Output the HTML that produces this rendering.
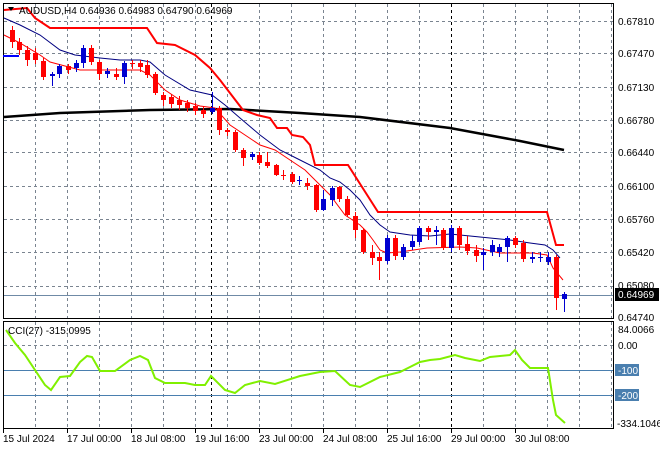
<!DOCTYPE html>
<html><head><meta charset="utf-8"><style>
html,body{margin:0;padding:0;background:#fff;}
body{width:660px;height:450px;overflow:hidden;position:relative;font-family:"Liberation Sans","DejaVu Sans",sans-serif;font-size:10px;color:#000;}
svg{position:absolute;left:0;top:0;}
text{font-family:"Liberation Sans","DejaVu Sans",sans-serif;font-size:10px;}
</style></head><body>
<svg id="s" width="660" height="450" viewBox="0 0 660 450" xmlns="http://www.w3.org/2000/svg">
<g id="grid" stroke="#7a8490" stroke-width="1" stroke-dasharray="3,3" fill="none"></g>
<rect x="3.5" y="3.5" width="610" height="315" fill="none" stroke="#000"/>
<rect x="3.5" y="321.5" width="610" height="107" fill="none" stroke="#000"/>
<line x1="4" y1="295.5" x2="613" y2="295.5" stroke="#6f8aa6"/>
<line x1="4" y1="370.5" x2="613" y2="370.5" stroke="#4a7faf"/>
<line x1="4" y1="395.5" x2="613" y2="395.5" stroke="#4a7faf"/>
<polyline fill="none" stroke="#000" stroke-width="2.5" points="4,117 60,113 150,110 230,109 300,113 360,117 450,128 520,141 564,150"/>
<polyline fill="none" stroke="#ff0000" stroke-width="2" points="4,10 27,8 35,18 50,28 147,28 157,43 175,45 195,55 210,68 220,80 243,110 257,115 270,118 277,128 287,128 292,135 303,137 310,145 315,165 348,165 378,212 547,212 556,245 564,245"/>
<polyline fill="none" stroke="#000080" stroke-width="1" points="4,18 20,25 40,35 60,50 75,55 100,58 120,60 140,60 150,62 165,75 190,90 212,95 225,105 240,118 260,135 280,150 300,160 320,170 330,178 340,182 350,190 360,200 370,215 380,225 390,232 410,235 430,236 450,234 470,236 490,238 510,240 530,243 545,245 553,250 560,258"/>
<polyline fill="none" stroke="#ff0000" stroke-width="1" points="4,35 20,43 40,55 50,62 65,66 80,70 130,70 140,70 150,75 165,90 180,100 200,106 215,108 230,125 245,135 260,145 275,150 290,160 305,170 315,180 330,195 345,215 360,225 367,232 373,240 380,250 387,253 400,252 427,248 460,247 477,248 500,253 533,253 547,255 553,268 563,280"/>
<line x1="3" y1="56" x2="19" y2="56" stroke="#0000ff" stroke-width="2"/>
<g id="c"></g>
<polyline fill="none" stroke="#80f000" stroke-width="2" points="6,330 15,343 25,355 35,370 45,385 51,390 60,377 70,376 80,362 87,356 92,357 100,371 115,371 130,360 140,356 148,360 155,378 165,383 185,383 195,385 205,385 211,376 225,390 235,393 245,385 260,381 275,384 300,376 320,372 335,371 350,385 360,387 380,377 400,372 410,367 420,362 430,360 440,359 455,355 465,358 480,361 490,357 500,356 510,355 515,350 522,360 530,368 540,368 548,368 553,400 556,415 565,423"/>
<g fill="#000">
<text x="618" y="25">0.67810</text><text x="618" y="57">0.67470</text><text x="618" y="91">0.67130</text><text x="618" y="124">0.66780</text><text x="618" y="156">0.66440</text><text x="618" y="190">0.66100</text><text x="618" y="223">0.65760</text><text x="618" y="256">0.65420</text><text x="618" y="289">0.65080</text><text x="618" y="321">0.64740</text>
</g>
<rect x="615" y="288" width="44" height="13" fill="#000"/>
<text x="618" y="298" fill="#fff">0.64969</text>
<text x="618" y="333">84.0066</text>
<text x="618" y="349">0.00</text>
<rect x="615" y="364" width="24" height="12" fill="#4a7faf"/><text x="618" y="374" fill="#fff">-100</text>
<rect x="615" y="389" width="24" height="12" fill="#4a7faf"/><text x="618" y="399" fill="#fff">-200</text>
<text x="617" y="427">-334.1046</text>
<text x="8" y="334">CCI(27) -315.0995</text>
<path d="M8,7 L14,7 L11,11 Z" fill="#000"/>
<text x="19" y="14">AUDUSD,H4  0.64936 0.64983 0.64790 0.64969</text>
<g id="ax" fill="#000"></g>
</svg>
<script>
var ns="http://www.w3.org/2000/svg";
function el(p,t,a){var e=document.createElementNS(ns,t);for(var k in a)e.setAttribute(k,a[k]);p.appendChild(e);return e;}
var g=document.getElementById('grid');
[21,53,87,120,152,186,219,252,286].forEach(function(y){el(g,'line',{x1:4,y1:y+.5,x2:613,y2:y+.5});});
el(g,'line',{x1:4,y1:345.5,x2:613,y2:345.5});
for(var x=35;x<613;x+=32){if(x==451)continue;el(g,'line',{x1:x+.5,y1:4,x2:x+.5,y2:318});el(g,'line',{x1:x+.5,y1:322,x2:x+.5,y2:428});}
[211,451].forEach(function(x){el(g,'line',{x1:x+.5,y1:4,x2:x+.5,y2:318,stroke:'#000'});el(g,'line',{x1:x+.5,y1:322,x2:x+.5,y2:428,stroke:'#000'});});
// candles: x, top, bottom, hi, lo, color(r/b)
var C=[[12,30,42,26,48,'r'],[19,42,50,38,55,'r'],[27,50,60,46,66,'r'],[35,53,60,48,64,'r'],[43,61,77,58,80,'r'],[52,74,76,72,86,'b'],[59,66,74,64,78,'b'],[68,66,70,64,74,'r'],[76,63,68,60,72,'b'],[83,48,63,45,68,'b'],[91,48,62,45,65,'r'],[99,62,74,60,80,'r'],[107,71,74,68,78,'b'],[116,74,77,68,80,'r'],[124,63,77,61,84,'b'],[132,63,64,60,69,'r'],[140,63,67,60,72,'r'],[147,65,75,60,78,'r'],[155,74,93,72,95,'r'],[163,95,100,92,106,'r'],[171,97,104,94,108,'r'],[179,100,105,96,110,'r'],[187,103,108,100,112,'r'],[195,106,111,103,115,'r'],[203,110,114,106,118,'r'],[212,108,112,92,114,'b'],[219,108,130,106,135,'r'],[227,130,132,128,136,'r'],[235,132,150,130,152,'r'],[243,150,158,148,166,'r'],[252,154,157,152,160,'b'],[259,155,163,152,165,'r'],[267,162,166,152,168,'r'],[276,165,175,164,176,'r'],[283,175,176,170,180,'r'],[292,174,182,172,184,'r'],[299,180,181,176,185,'b'],[307,183,186,178,190,'r'],[316,185,210,184,212,'r'],[323,199,210,190,211,'b'],[332,188,200,186,206,'b'],[339,187,199,186,202,'r'],[347,199,215,196,217,'r'],[355,216,230,212,238,'r'],[363,230,252,228,254,'r'],[372,252,258,245,265,'r'],[379,257,261,252,280,'r'],[387,238,261,235,264,'b'],[395,238,256,235,260,'r'],[403,247,257,244,260,'b'],[412,241,247,235,250,'b'],[419,228,242,226,245,'b'],[428,228,232,226,240,'r'],[436,230,232,226,245,'b'],[443,230,248,228,250,'r'],[451,228,248,225,252,'b'],[459,228,245,226,250,'r'],[467,244,251,236,255,'r'],[476,250,256,245,262,'r'],[483,252,255,248,270,'b'],[492,245,252,240,256,'b'],[499,247,252,244,257,'b'],[507,238,247,236,262,'b'],[515,238,245,236,248,'r'],[523,243,259,240,262,'r'],[532,257,259,252,263,'b'],[540,257,258,252,262,'b'],[548,257,262,252,265,'b'],[556,257,298,255,310,'r'],[564,294,299,292,312,'b']];
var cg=document.getElementById('c');
C.forEach(function(c){var col=c[5]=='r'?'#ff0000':'#0000d0';el(cg,'line',{x1:c[0]+.5,y1:c[3],x2:c[0]+.5,y2:c[4],stroke:col});var h=Math.max(1,c[2]-c[1]);el(cg,'rect',{x:c[0]-2,y:c[1],width:5,height:h,fill:col});});
var ax=document.getElementById('ax');
</script>
<svg width="660" height="450" style="position:absolute;left:0;top:0" xmlns="http://www.w3.org/2000/svg">
<g stroke="#000"><line x1="3.5" y1="429" x2="3.5" y2="433"/><line x1="67.5" y1="429" x2="67.5" y2="433"/><line x1="131.5" y1="429" x2="131.5" y2="433"/><line x1="195.5" y1="429" x2="195.5" y2="433"/><line x1="259.5" y1="429" x2="259.5" y2="433"/><line x1="323.5" y1="429" x2="323.5" y2="433"/><line x1="387.5" y1="429" x2="387.5" y2="433"/><line x1="451.5" y1="429" x2="451.5" y2="433"/><line x1="515.5" y1="429" x2="515.5" y2="433"/></g>
<g font-family="Liberation Sans, sans-serif" font-size="10" fill="#000">
<text x="3" y="442">15 Jul 2024</text><text x="67" y="442">17 Jul 00:00</text><text x="131" y="442">18 Jul 08:00</text><text x="195" y="442">19 Jul 16:00</text><text x="259" y="442">23 Jul 00:00</text><text x="323" y="442">24 Jul 08:00</text><text x="387" y="442">25 Jul 16:00</text><text x="451" y="442">29 Jul 00:00</text><text x="515" y="442">30 Jul 08:00</text>
</g></svg>
</body></html>
